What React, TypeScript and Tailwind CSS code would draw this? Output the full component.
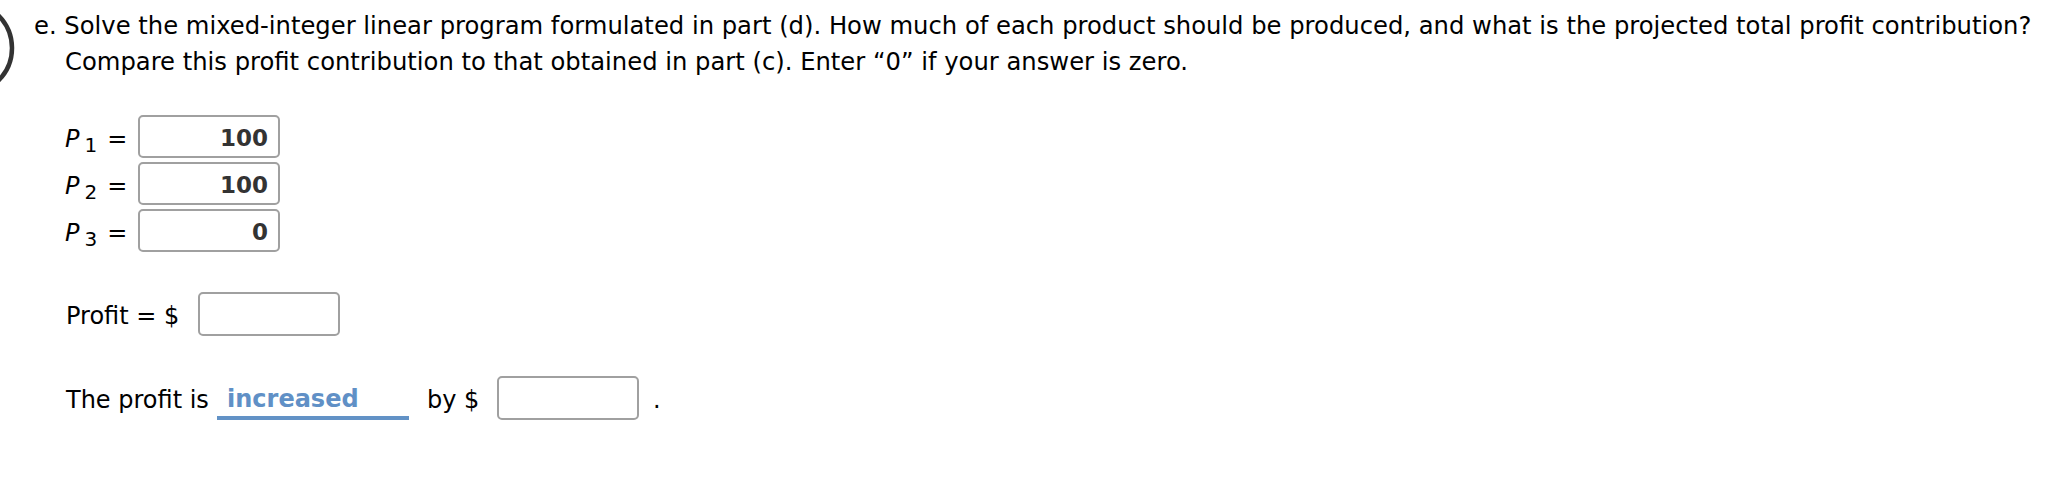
import React from "react";

function Box({ value }: { value?: string }) {
  return (
    <div className="w-[142px] h-[44px] shrink-0 rounded-[5px] border-2 border-[#a0a0a0] bg-white flex items-center justify-end pr-[10px] text-[23px] font-bold text-[#333333]">
      {value}
    </div>
  );
}

function PRow({ n, value }: { n: string; value: string }) {
  return (
    <div className="flex items-center h-[43px] pl-[65px]">
      <div className="w-[73px] shrink-0 text-[24px] leading-[43px] pt-[11px]">
        <span className="italic">P</span>
        <span className="text-[20px] align-[-5px] ml-[5px]">{n}</span>
        <span className="ml-[10px]">=</span>
      </div>
      <div className="w-[142px] h-[43px] shrink-0 rounded-[5px] border-2 border-[#a0a0a0] bg-white flex items-center justify-end pr-[10px] pt-[3px] text-[23px] font-bold text-[#333333]">
        {value}
      </div>
    </div>
  );
}

export default function App() {
  return (
    <div
      className="relative w-[2058px] h-[479px] overflow-hidden bg-white text-black"
      style={{ fontFamily: '"DejaVu Sans", Verdana, sans-serif' }}
    >
      <svg
        className="absolute left-0 top-0"
        width="20"
        height="100"
        viewBox="0 0 20 100"
      >
        <circle cx="-34" cy="48" r="46" fill="none" stroke="#333333" strokeWidth="4.5" />
      </svg>

      <p className="pt-[8px] pl-[65px] -indent-[31px] text-[24.25px] leading-[36px]">
        e. Solve the mixed-integer linear program formulated in part (d). How much of each product should be produced, and what is the projected total profit contribution?
        <br />
        Compare this profit contribution to that obtained in part (c). Enter “0” if your answer is zero.
      </p>

      <div className="mt-[35px] flex flex-col gap-[4px]">
        <PRow n="1" value="100" />
        <PRow n="2" value="100" />
        <PRow n="3" value="0" />
      </div>

      <div className="mt-[40px] flex items-center pl-[66px] text-[24px]">
        <span className="w-[132px] shrink-0 pt-[4px]">Profit = $</span>
        <Box />
      </div>

      <div className="mt-[40px] flex items-center pl-[66px] text-[24px]">
        <span className="w-[151px] shrink-0 pt-[4px]">The profit is</span>
        <div className="w-[192px] h-[44px] shrink-0 border-b-4 border-[#6292c6] pl-[10px] pt-[6px] flex items-center font-bold text-[#6090c6]">
          increased
        </div>
        <span className="ml-[18px] w-[70px] shrink-0 pt-[4px]">by $</span>
        <Box />
        <span className="ml-[14px] pt-[4px]">.</span>
      </div>
    </div>
  );
}
